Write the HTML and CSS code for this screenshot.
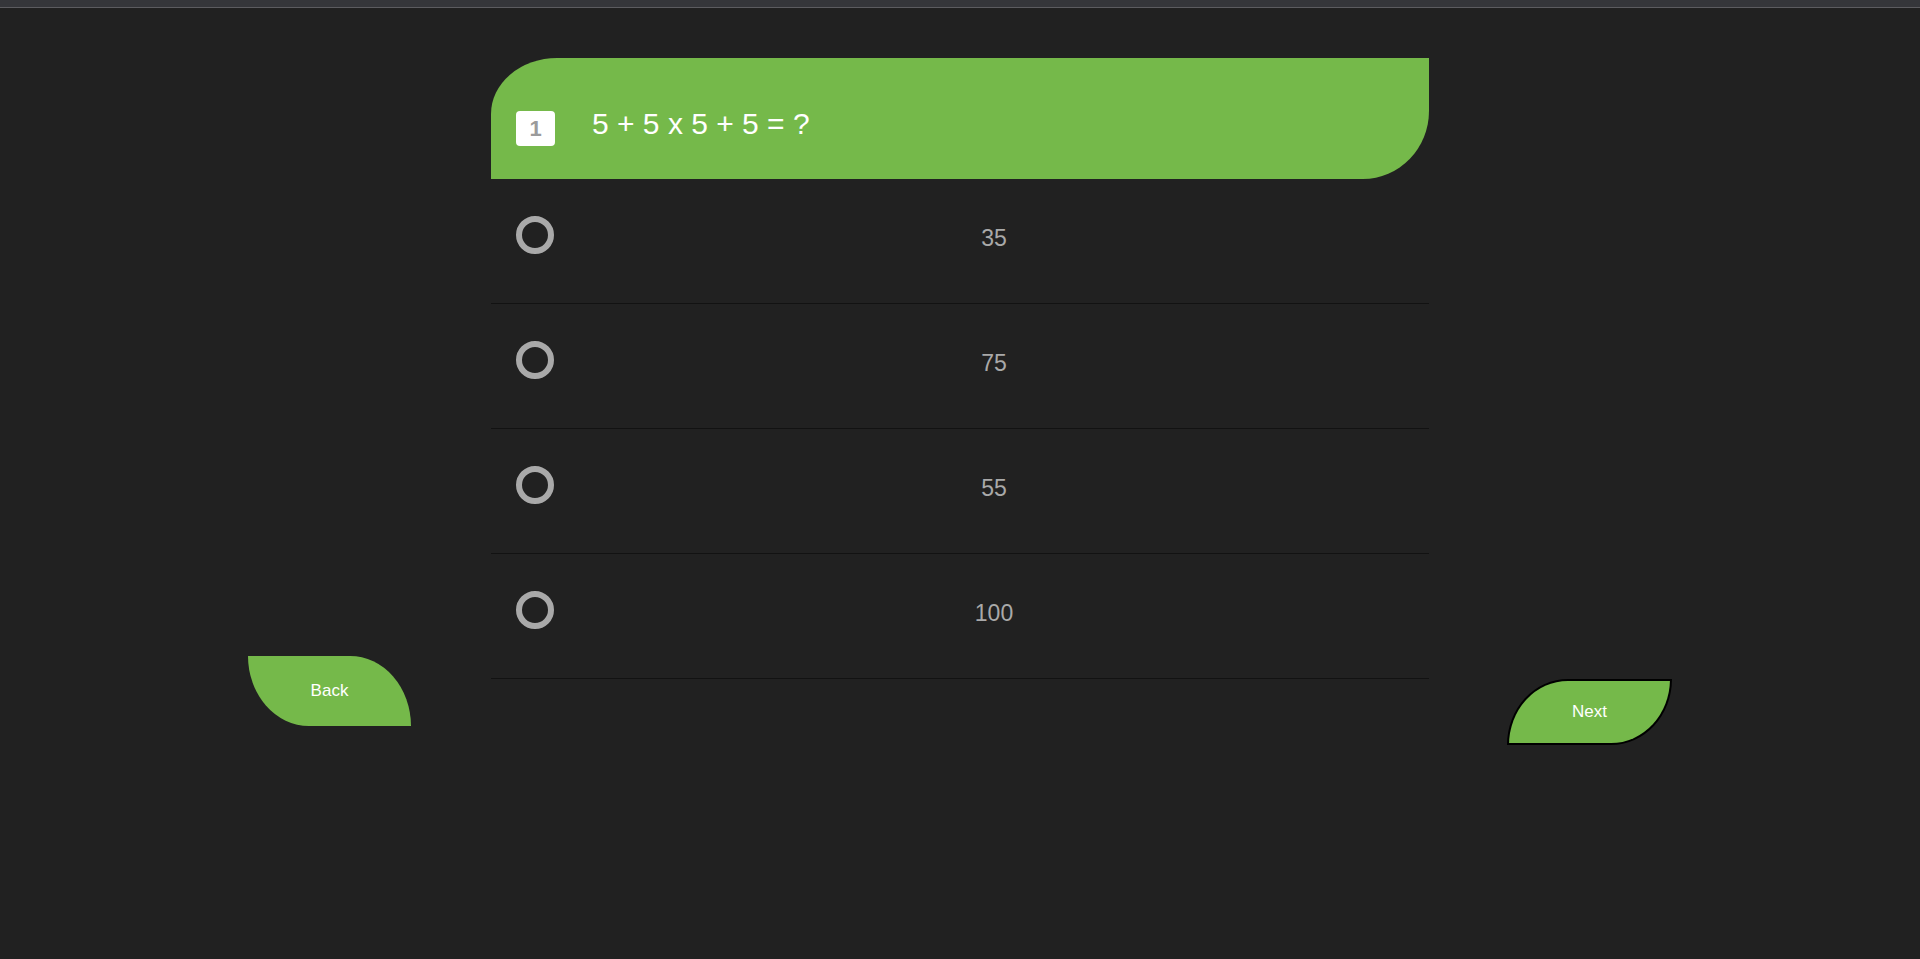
FILE: index.html
```html
<!DOCTYPE html>
<html lang="en">
<head>
<meta charset="utf-8">
<title>Quiz</title>
<link rel="stylesheet" href="styles.css">
</head>
<body>
<div class="topbar"></div>
<main class="stage">
  <button class="nav-btn back">Back</button>
  <section class="quiz">
    <header class="question">
      <span class="q-num">1</span>
      <h1 class="q-text">5 + 5 x 5 + 5 = ?</h1>
    </header>
    <ul class="options">
      <li class="option"><span class="radio-col"><span class="radio"></span></span><span class="label">35</span></li>
      <li class="option"><span class="radio-col"><span class="radio"></span></span><span class="label">75</span></li>
      <li class="option"><span class="radio-col"><span class="radio"></span></span><span class="label">55</span></li>
      <li class="option"><span class="radio-col"><span class="radio"></span></span><span class="label">100</span></li>
    </ul>
  </section>
  <button class="nav-btn next">Next</button>
</main>
</body>
</html>
```

FILE: styles.css
```css
* { box-sizing: border-box; }
html, body {
  margin: 0;
  padding: 0;
  background: #212121;
  font-family: "Liberation Sans", Arial, sans-serif;
}
body { min-height: 959px; }
.topbar {
  height: 8px;
  background: #35363a;
  border-bottom: 1px solid #5c5c60;
}
.stage {
  display: flex;
  justify-content: center;
  align-items: flex-start;
  padding-top: 50px;
}
.quiz {
  width: 938px;
  flex: none;
}
.question {
  height: 121px;
  background: #75b94a;
  border-radius: 66px 0 66px 0 / 56px 0 68px 0;
  display: flex;
  align-items: flex-start;
  padding: 49px 0 0 25px;
}
.q-num {
  width: 39px;
  height: 35px;
  margin-top: 4px;
  background: #fff;
  border-radius: 4px;
  color: #9b9b9b;
  font-weight: bold;
  font-size: 22px;
  display: flex;
  align-items: center;
  justify-content: center;
}
.q-text {
  margin: 0 0 0 37px;
  font-size: 30px;
  font-weight: normal;
  color: #fff;
}
.options {
  list-style: none;
  margin: 0;
  padding: 0;
}
.option {
  height: 125px;
  display: flex;
  border-bottom: 1px solid #121212;
}
.radio-col {
  width: 68px;
  flex: none;
  padding: 37px 0 0 25px;
}
.radio {
  display: block;
  width: 38px;
  height: 38px;
  border: 6px solid #a9a9a9;
  border-radius: 50%;
}
.label {
  flex: 1;
  display: flex;
  align-items: center;
  justify-content: center;
  padding-bottom: 5px;
  color: #a9a9a9;
  font-size: 23px;
}
.nav-btn {
  flex: none;
  background: #75b94a;
  color: #fff;
  font-family: "Liberation Sans", Arial, sans-serif;
  font-size: 17px;
  cursor: pointer;
  padding: 0;
}
.back {
  width: 163px;
  height: 70px;
  margin-top: 598px;
  margin-right: 80px;
  border: none;
  border-radius: 0 61px 0 61px / 0 70px 0 70px;
}
.next {
  width: 165px;
  height: 66px;
  margin-top: 621px;
  margin-left: 78px;
  border: 2px solid #000;
  border-radius: 61px 0 61px 0 / 66px 0 66px 0;
}
```
